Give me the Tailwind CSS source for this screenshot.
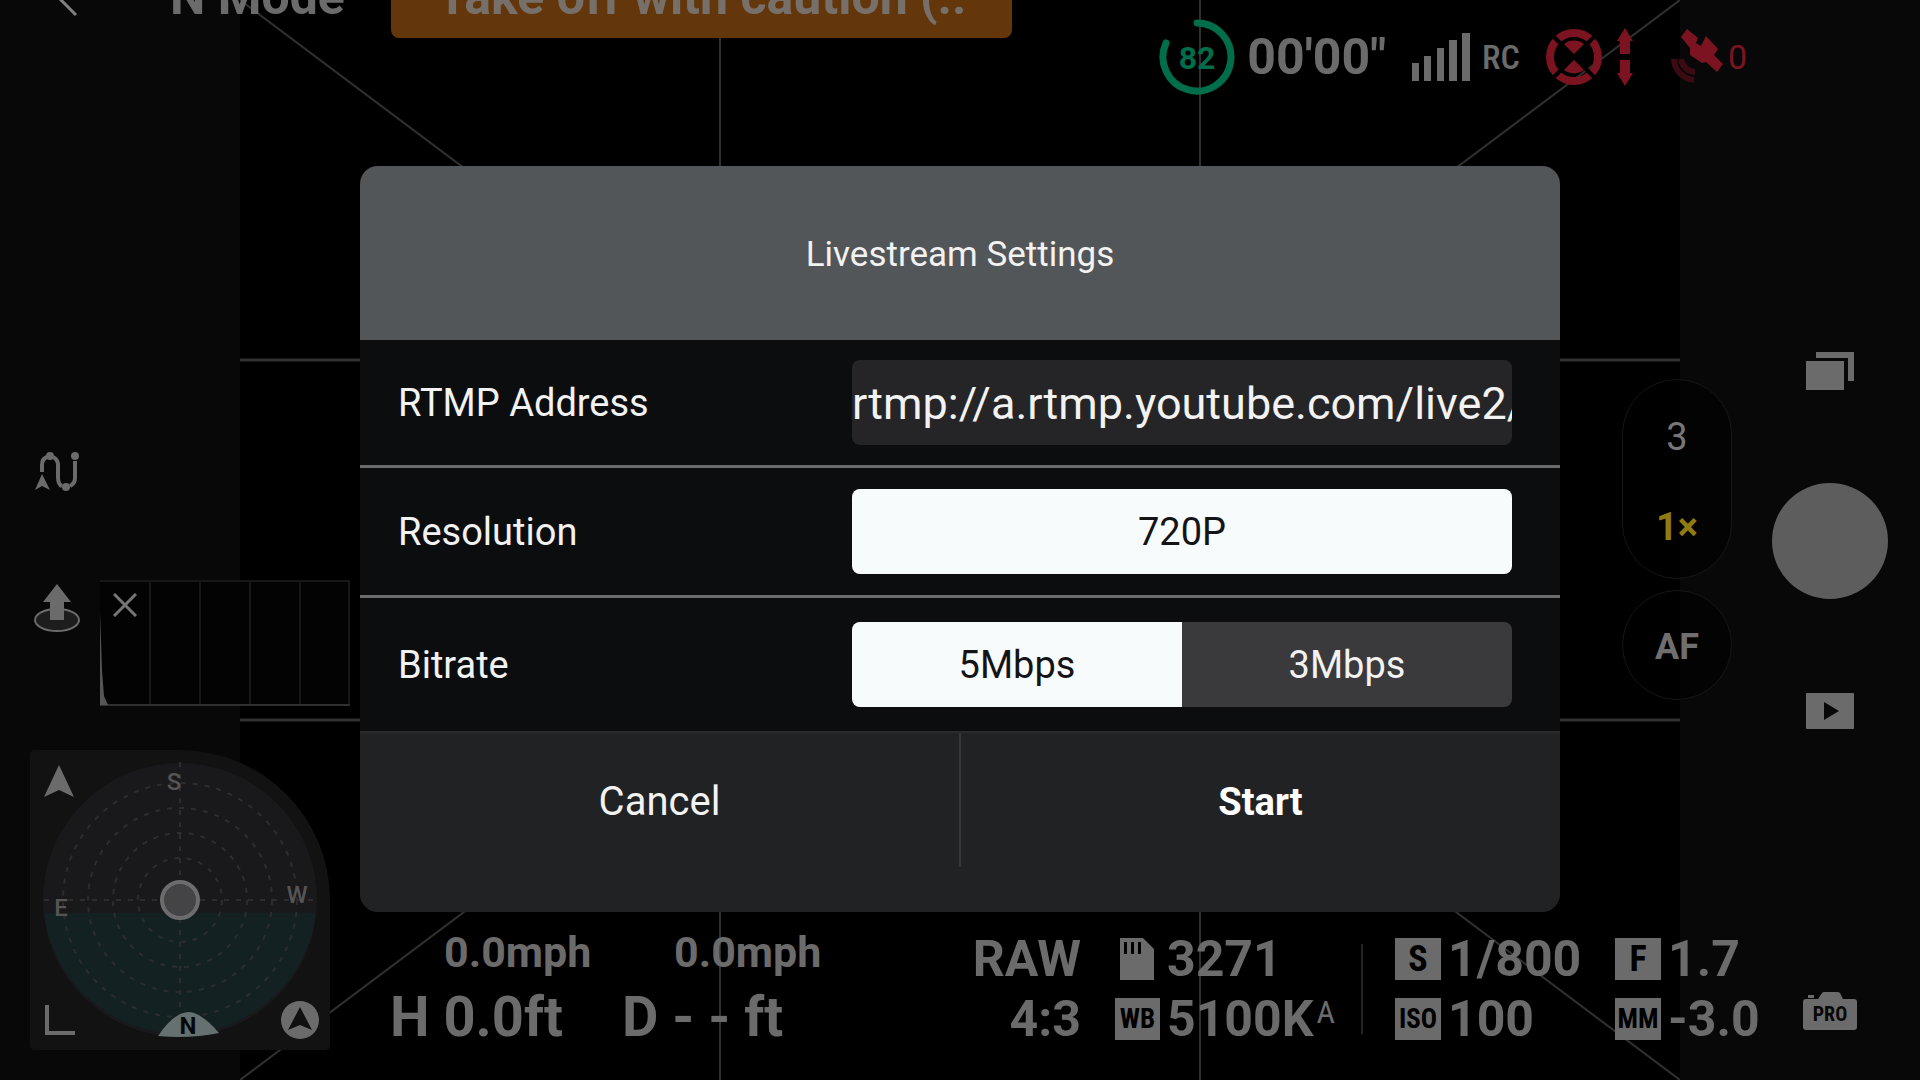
<!DOCTYPE html>
<html lang="en">

<head>
    <meta charset="UTF-8">
    <meta name="viewport" content="width=device-width, initial-scale=1.0">
    <title>Livestream Settings</title>
    <script src="https://cdn.jsdelivr.net/npm/@tailwindcss/browser@4"></script>
</head>

<body class="bg-[#080808] font-[Roboto,'Liberation_Sans',sans-serif] text-[#6b6b6b]">

    <div class="relative flex min-h-screen flex-col overflow-hidden">

        <!-- Camera view with grid lines -->
        <div class="absolute inset-y-0 left-[12.5%] right-[12.5%] bg-black">
            <svg class="h-full w-full" viewBox="0 0 1440 1080" preserveAspectRatio="none" fill="none" stroke="#303030" stroke-width="2" aria-hidden="true">
                <path d="M480 0V1080M960 0V1080" />
                <path d="M0 360H1440M0 720H1440" stroke-width="3" />
                <path d="M0 0L1440 1080M1440 0L0 1080" />
            </svg>
        </div>

        <!-- Top bar -->
        <header class="relative flex h-24 items-start">
            <div class="flex h-[38px] w-[391px] items-end overflow-hidden pl-[58px]">
                <button class="h-[38px] w-[20px]" aria-label="Back">
                    <svg class="h-[38px] w-[20px]" viewBox="0 0 20 38" fill="none" stroke="#808080" stroke-width="3"><path d="M18 -16L3 0L18 15" /></svg>
                </button>
                <span class="ml-[92px] text-[50px] font-bold leading-[82px]">N Mode</span>
            </div>
            <div class="flex h-[38px] w-[621px] items-end overflow-hidden rounded-b-lg bg-[#63370b] pl-[46px] text-[#77706a]">
                <span class="whitespace-nowrap text-[50px] font-bold leading-[82px]">Take off with caution (..</span>
            </div>

            <div class="ml-auto mr-[173px] flex h-[76px] items-center pt-[38px]">
                <svg class="h-[76px] w-[76px]" viewBox="0 0 76 76" fill="none" aria-label="Battery 82%">
                    <path d="M38 4A34 34 0 1 1 7 24" stroke="#006e4a" stroke-width="7" stroke-linecap="round" />
                    <text x="38" y="50" text-anchor="middle" fill="#006e4a" class="text-[32px] font-bold">82</text>
                </svg>
                <span class="ml-3 text-[50px] font-bold">00'00"</span>
                <svg class="ml-[26px] h-12 w-[58px]" viewBox="0 0 58 48" fill="#6b6b6b" aria-hidden="true">
                    <path d="M0 30h7v18H0zM12 23h7v25h-7zM25 15h7v33h-7zM37 7h8v41h-8zM50 0h8v48h-8z" />
                </svg>
                <span class="ml-3 text-[34px] font-medium font-['Roboto_Condensed','Liberation_Sans_Narrow',Roboto,sans-serif]">RC</span>
                <svg class="ml-[26px] h-[58px] w-[88px]" viewBox="0 0 88 58" fill="#7b1420" aria-hidden="true">
                    <circle cx="28" cy="29" r="24" fill="none" stroke="#7b1420" stroke-width="8" />
                    <path d="M28 27L17 17A16 16 0 0 1 39 17ZM28 31L17 41A16 16 0 0 0 39 41Z" />
                    <path d="M7 8L49 50M49 8L7 50" stroke="#000" stroke-width="4" />
                    <path d="M79 0L87 13H84V26H74V13H71ZM79 58L87 45H84V32H74V45H71Z" />
                </svg>
                <svg class="ml-[34px] h-14 w-14" viewBox="0 0 56 56" aria-hidden="true">
                    <path d="M6 30A22 22 0 0 0 26 51M13 30A15 15 0 0 0 27 43" fill="none" stroke="#3c0a12" stroke-width="6" />
                    <path d="M19 0L30 9L28 14L33 17L38 7L50 20L46 26L55 35L49 43L38 33L34 34L22 26L22 19L13 8Z" fill="#7b1420" />
                </svg>
                <span class="ml-1 text-[34px] font-normal text-[#7b1420]">0</span>
            </div>
        </header>

        <div class="relative flex flex-1">

            <!-- Left tools, histogram and attitude radar -->
            <aside class="flex w-[350px] shrink-0 flex-col justify-end pb-[30px] pl-[30px]">
                <button class="ml-1 h-10 w-12" aria-label="Waypoints">
                    <svg class="h-10 w-12" viewBox="0 0 48 40" fill="none" stroke="#6b6b6b" stroke-width="4">
                        <path d="M8 20V13C8 8 10 6 13 5M19 5C23 7 24 10 24 13V25C24 30 25 33 28 34M36 34C40 32 41 29 41 26V9" />
                        <g fill="#6b6b6b" stroke="none">
                            <circle cx="16" cy="4" r="4" /><circle cx="41" cy="4" r="4" /><circle cx="32" cy="35" r="4" />
                            <path d="M8 22L16 38L8 34L1 38Z" />
                        </g>
                    </svg>
                </button>
                <div class="mt-[88px] flex items-start gap-[18px]">
                    <button class="ml-1 h-[52px] w-12 shrink-0" aria-label="Take off">
                        <svg class="h-[52px] w-12" viewBox="0 0 48 52">
                            <ellipse cx="23" cy="40" rx="22" ry="11" fill="#1d1d1d" stroke="#6b6b6b" stroke-width="2" />
                            <path d="M23 4L37 22H30V40H16V22H9Z" fill="#6b6b6b" />
                        </svg>
                    </button>
                    <div class="relative h-[126px] w-[250px] bg-[#030303]">
                        <svg class="h-full w-full" viewBox="0 0 250 126" fill="none" aria-hidden="true">
                            <path d="M0 1H250M50 1V125M100 0V126M150 0V126M200 0V126M249 1V125" stroke="#171717" stroke-width="2" />
                            <path d="M0 125H250" stroke="#303030" stroke-width="2" />
                            <path d="M0 32L2 90L4 116L8 125H0Z" fill="#555" />
                        </svg>
                        <button class="absolute left-[13px] top-[13px] h-6 w-6" aria-label="Close histogram">
                            <svg class="h-6 w-6" viewBox="0 0 24 24" stroke="#767676" stroke-width="3"><path d="M1 1L23 23M23 1L1 23" /></svg>
                        </button>
                    </div>
                </div>
                <svg class="mt-11 h-[300px] w-[300px]" viewBox="0 0 300 300" aria-label="Attitude indicator">
                    <path d="M5 0H150A150 150 0 0 1 300 150V295Q300 300 295 300H5Q0 300 0 295V5Q0 0 5 0Z" fill="#121213" />
                    <circle cx="150" cy="150" r="137" fill="#19191b" />
                    <path d="M14 163A137 137 0 0 0 286 163Z" fill="#142122" />
                    <g fill="none" stroke="#2b2d2e" stroke-width="2" stroke-dasharray="5 7">
                        <circle cx="150" cy="150" r="42" />
                        <circle cx="150" cy="150" r="67" />
                        <circle cx="150" cy="150" r="92" />
                        <circle cx="150" cy="150" r="117" />
                        <path d="M150 12V288M14 150H286" />
                    </g>
                    <path d="M128 286Q144 262 159 262Q172 263 189 283Q160 289 128 286Z" fill="#657070" />
                    <g font-size="24" font-weight="500" fill="#555" text-anchor="middle">
                        <text x="144" y="40">S</text>
                        <text x="31" y="166">E</text>
                        <text x="267" y="153">W</text>
                        <text x="158" y="284" fill="#05090a" font-weight="700">N</text>
                    </g>
                    <circle cx="150" cy="150" r="18" fill="#444446" stroke="#6c6c6c" stroke-width="4" />
                    <path d="M29 15L44 47L29 40L14 47Z" fill="#6b6b6b" />
                    <path d="M17 255V283H45" fill="none" stroke="#6b6b6b" stroke-width="4" />
                    <circle cx="270" cy="270" r="19" fill="#6b6b6b" />
                    <path d="M270 257L282 280L270 275L258 280Z" fill="#101011" />
                </svg>
            </aside>

            <div class="flex flex-1 flex-col justify-end pl-10">
                <!-- Zoom and focus -->
                <div class="mr-10 flex flex-col gap-[11px] self-end">
                    <div class="flex h-[200px] w-[110px] flex-col items-center gap-7 rounded-full border border-[#161616] bg-black/60 pt-[26px] text-[38px]">
                        <button class="h-[62px] w-full text-[#777]">3</button>
                        <button class="h-[62px] w-full font-bold text-[#8f7b12]">1×</button>
                    </div>
                    <button class="h-[110px] w-[110px] rounded-full border border-[#161616] bg-black/60 pt-1 text-[36px] font-bold text-[#6f6f6f]">AF</button>
                </div>

                <!-- Telemetry -->
                <footer class="mt-[220px] flex items-end justify-between whitespace-nowrap pb-[30px] font-bold">
                    <div class="grid grid-cols-[230px_auto] leading-[65px]">
                        <span class="pl-[54px] text-[43px]">0.0mph</span>
                        <span class="pl-[54px] text-[43px]">0.0mph</span>
                        <span class="text-[56px]">H 0.0ft</span>
                        <span class="pl-[2px] text-[56px]">D - - ft</span>
                    </div>
                    <div class="mb-[10px] flex items-center text-[50px] leading-[42px]">
                        <div class="flex flex-col gap-[18px] text-right">
                            <span>RAW</span>
                            <span>4:3</span>
                        </div>
                        <div class="ml-[34px] flex w-[246px] flex-col gap-[18px]">
                            <div class="flex gap-[7px]">
                                <svg class="h-[42px] w-[45px]" viewBox="0 0 45 42" fill="#6b6b6b" aria-label="SD card">
                                    <path d="M5 0H28L39 11V42H5Z" />
                                    <path d="M9 4h3v12H9zM16 4h3v12h-3zM23 4h3v12h-3z" fill="#000" />
                                </svg>
                                <span>3271</span>
                            </div>
                            <div class="flex gap-[7px]">
                                <span class="w-[45px] bg-[#6b6b6b] text-center text-[27px] text-black font-['Roboto_Condensed','Liberation_Sans_Narrow',Roboto,sans-serif]">WB</span>
                                <span>5100K</span>
                                <span class="-ml-1 text-[32px] font-normal leading-7 font-['Roboto_Condensed','Liberation_Sans_Narrow',Roboto,sans-serif]">A</span>
                            </div>
                        </div>
                        <div class="h-[90px] w-[2px] bg-[#242424]"></div>
                        <div class="ml-8 grid grid-cols-[220px_157px] gap-y-[18px]">
                            <div class="flex gap-[7px]">
                                <span class="w-[46px] bg-[#6b6b6b] text-center text-[36px] text-black font-['Roboto_Condensed','Liberation_Sans_Narrow',Roboto,sans-serif]">S</span>
                                <span>1/800</span>
                            </div>
                            <div class="flex gap-[7px]">
                                <span class="w-[46px] bg-[#6b6b6b] text-center text-[36px] text-black font-['Roboto_Condensed','Liberation_Sans_Narrow',Roboto,sans-serif]">F</span>
                                <span>1.7</span>
                            </div>
                            <div class="flex gap-[7px]">
                                <span class="w-[46px] bg-[#6b6b6b] text-center text-[27px] text-black font-['Roboto_Condensed','Liberation_Sans_Narrow',Roboto,sans-serif]">ISO</span>
                                <span>100</span>
                            </div>
                            <div class="flex gap-[7px]">
                                <span class="w-[46px] bg-[#6b6b6b] text-center text-[27px] text-black font-['Roboto_Condensed','Liberation_Sans_Narrow',Roboto,sans-serif]">MM</span>
                                <span>-3.0</span>
                            </div>
                        </div>
                    </div>
                </footer>
            </div>

            <!-- Shutter column -->
            <aside class="flex w-[148px] shrink-0 flex-col items-center justify-end pb-[50px] pr-8">
                <button aria-label="Capture mode">
                    <svg class="h-[38px] w-12" viewBox="0 0 48 38" fill="#6b6b6b"><path d="M0 9H38V38H0ZM10 0H48V29H42V6H10Z" /></svg>
                </button>
                <button class="mt-[93px] h-[116px] w-[116px] rounded-full bg-[#5e5d5e]" aria-label="Shutter"></button>
                <button class="mt-[94px]" aria-label="Playback">
                    <svg class="h-9 w-12" viewBox="0 0 48 36" fill="#6b6b6b"><path fill-rule="evenodd" d="M1 0H47Q48 0 48 1V35Q48 36 47 36H1Q0 36 0 35V1Q0 0 1 0ZM18 9V27L33 18Z" /></svg>
                </button>
                <button class="mt-[263px]" aria-label="Pro mode">
                    <svg class="h-[38px] w-[54px]" viewBox="0 0 54 38">
                        <path d="M3 7H15L19 1Q20 0 21 0H34Q36 0 37 1L40 7H51Q54 7 54 10V35Q54 38 51 38H3Q0 38 0 35V10Q0 7 3 7ZM5 3H11V6H5Z" fill="#6b6b6b" />
                        <text x="27" y="29" text-anchor="middle" fill="#080808" class="text-[20px] font-bold font-['Roboto_Condensed','Liberation_Sans_Narrow',Roboto,sans-serif]">PRO</text>
                    </svg>
                </button>
            </aside>
        </div>

        <!-- Livestream dialog -->
        <div class="absolute inset-0 flex items-center justify-center pb-[2px]">
            <form class="w-[62.5%] overflow-hidden rounded-[18px] bg-[#0c0d0f] text-[38px] text-[#f2f2f2]" role="dialog" aria-labelledby="dialogTitle">
                <h1 id="dialogTitle" class="flex h-[174px] items-center justify-center bg-[#535658] pt-1 text-[35px]">Livestream Settings</h1>

                <div class="flex h-32 items-center justify-between border-b-3 border-[#6a6b6d] pl-[38px] pr-12">
                    <label for="rtmp" class="pt-[2px]">RTMP Address</label>
                    <input id="rtmp" type="text" value="rtmp://a.rtmp.youtube.com/live2/" class="h-[85px] w-[660px] rounded-lg bg-[#252527] pt-[2px] text-[45px] outline-none">
                </div>

                <div class="flex h-[130px] items-center justify-between border-b-3 border-[#6a6b6d] pl-[38px] pr-12" role="radiogroup" aria-labelledby="resolutionLabel">
                    <span id="resolutionLabel" class="pt-[2px]">Resolution</span>
                    <div class="flex h-[85px] w-[660px] overflow-hidden rounded-lg bg-[#3a3a3c]">
                        <label class="relative flex flex-1 items-center justify-center pt-[2px] has-checked:bg-[#f8fbfc] has-checked:text-[#141416]">
                            <input type="radio" name="resolution" class="sr-only" checked>720P
                        </label>
                    </div>
                </div>

                <div class="flex h-[133px] items-center justify-between pl-[38px] pr-12" role="radiogroup" aria-labelledby="bitrateLabel">
                    <span id="bitrateLabel" class="pt-[2px]">Bitrate</span>
                    <div class="flex h-[85px] w-[660px] overflow-hidden rounded-lg bg-[#3a3a3c]">
                        <label class="relative flex flex-1 items-center justify-center pt-[2px] has-checked:bg-[#f8fbfc] has-checked:text-[#141416]">
                            <input type="radio" name="bitrate" class="sr-only" checked>5Mbps
                        </label>
                        <label class="relative flex flex-1 items-center justify-center pt-[2px] has-checked:bg-[#f8fbfc] has-checked:text-[#141416]">
                            <input type="radio" name="bitrate" class="sr-only">3Mbps
                        </label>
                    </div>
                </div>

                <div class="flex h-[181px] items-start border-t-2 border-[#2a2b2d] bg-[#212224]">
                    <button type="button" class="h-[134px] flex-1 border-r-2 border-[#353638] pt-1 text-[40px]">Cancel</button>
                    <button type="submit" class="h-[134px] flex-1 pt-1 font-bold text-white">Start</button>
                </div>
            </form>
        </div>
    </div>

</body>

</html>
